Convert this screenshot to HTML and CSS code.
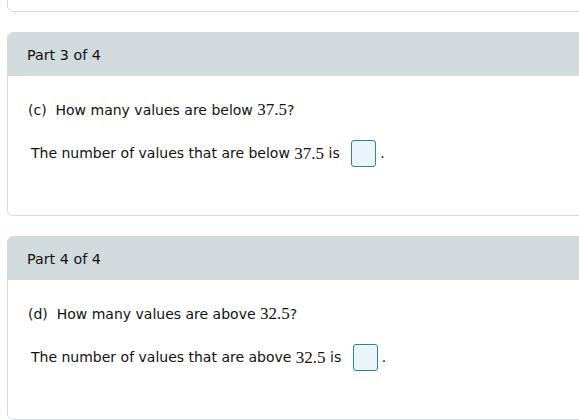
FILE: index.html
```html
<!DOCTYPE html>
<html>
<head>
<meta charset="utf-8">
<link rel="stylesheet" href="styles.css">
</head>
<body>
<div class="page">
  <div class="card card-prev"></div>
  <div class="card">
    <div class="card-header">Part 3 of 4</div>
    <div class="card-body">
      <p class="question">(c)&nbsp; How many values are below <span class="num">37.5</span>?</p>
      <p class="answer">The number of values that are below <span class="num">37.5</span> is <span class="input-box"></span><span class="dot">.</span></p>
    </div>
  </div>
  <div class="card">
    <div class="card-header">Part 4 of 4</div>
    <div class="card-body">
      <p class="question">(d)&nbsp; How many values are above <span class="num">32.5</span>?</p>
      <p class="answer">The number of values that are above <span class="num">32.5</span> is <span class="input-box"></span><span class="dot">.</span></p>
    </div>
  </div>
</div>
</body>
</html>
```
FILE: styles.css
```css
html, body {
  margin: 0;
  padding: 0;
  background: #ffffff;
}
body {
  font-family: "DejaVu Sans", Verdana, sans-serif;
  font-size: 14px;
  color: #111111;
  overflow: hidden;
}
.page {
  display: flex;
  flex-direction: column;
  gap: 20px;
  padding-left: 7px;
  margin-top: -200px;
}
.card {
  width: 640px;
  border: 1px solid #d3dbde;
  border-radius: 6px;
  background: #ffffff;
  overflow: hidden;
}
.card-prev {
  height: 210px;
}
.card-header {
  background: #d1dadd;
  height: 43px;
  display: flex;
  align-items: center;
  padding-left: 19px;
  font-size: 14.3px;
}
.card-body {
  padding: 24px 0 0 20px;
  height: 115px;
}
.question {
  margin: 0;
  line-height: 20px;
}
.answer {
  margin: 20px 0 0 3px;
  line-height: 27px;
  display: flex;
  align-items: center;
  white-space: pre;
}
.num {
  font-family: "Liberation Serif", "Times New Roman", serif;
  font-size: 17px;
}
.input-box {
  display: inline-block;
  width: 23px;
  height: 25px;
  border: 1px solid #2b8394;
  border-radius: 3px;
  background: #e9f5f9;
  margin-left: 7px;
}
.dot {
  margin-left: 4px;
}
```
